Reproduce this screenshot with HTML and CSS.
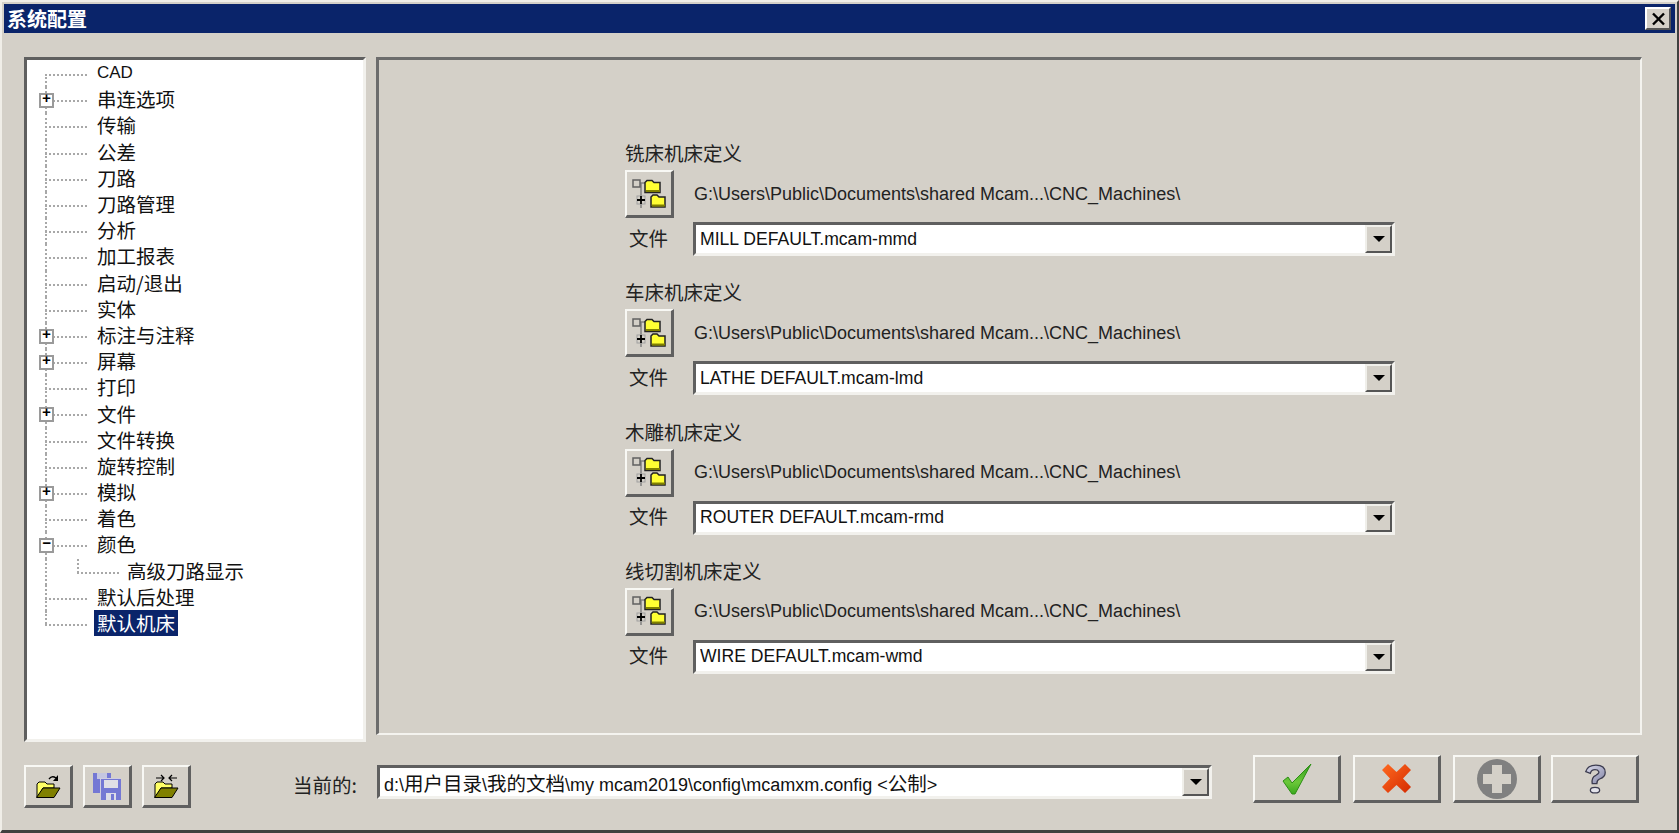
FILE: index.html
```html
<!DOCTYPE html>
<html lang="zh">
<head>
<meta charset="utf-8">
<title>系统配置</title>
<link rel="stylesheet" href="styles.css">
</head>
<body>
<div class="window">
  <div class="titlebar">
    <span class="title-text">系统配置</span>
    <button class="close-btn"><svg width="15" height="14" viewBox="0 0 15 14"><path d="M2 1.500l11 11M13 1.500l-11 11" stroke="#000" stroke-width="2.400" fill="none"/></svg></button>
  </div>
  <div class="main">
    <div class="tree">
      <div class="row latin-row"><span class="label">CAD</span></div>
      <div class="row"><span class="box">+</span><span class="label">串连选项</span></div>
      <div class="row"><span class="label">传输</span></div>
      <div class="row"><span class="label">公差</span></div>
      <div class="row"><span class="label">刀路</span></div>
      <div class="row"><span class="label">刀路管理</span></div>
      <div class="row"><span class="label">分析</span></div>
      <div class="row"><span class="label">加工报表</span></div>
      <div class="row"><span class="label">启动/退出</span></div>
      <div class="row"><span class="label">实体</span></div>
      <div class="row"><span class="box">+</span><span class="label">标注与注释</span></div>
      <div class="row"><span class="box">+</span><span class="label">屏幕</span></div>
      <div class="row"><span class="label">打印</span></div>
      <div class="row"><span class="box">+</span><span class="label">文件</span></div>
      <div class="row"><span class="label">文件转换</span></div>
      <div class="row"><span class="label">旋转控制</span></div>
      <div class="row"><span class="box">+</span><span class="label">模拟</span></div>
      <div class="row"><span class="label">着色</span></div>
      <div class="row"><span class="box minus">−</span><span class="label">颜色</span></div>
      <div class="row child"><span class="elbow"></span><span class="label">高级刀路显示</span></div>
      <div class="row"><span class="label">默认后处理</span></div>
      <div class="row last"><span class="label selected">默认机床</span></div>
    </div>
    <div class="panel">
      <section class="group">
        <div class="group-title">铣床机床定义</div>
        <div class="path-row">
          <button class="btn tree-btn"><svg width="34" height="30" viewBox="0 0 34 30"><use href="#i-tree"/></svg></button>
          <span class="path">G:\Users\Public\Documents\shared Mcam...\CNC_Machines\</span>
        </div>
        <div class="file-row">
          <span class="file-label">文件</span>
          <div class="combo"><span class="combo-text">MILL DEFAULT.mcam-mmd</span><span class="arrow"></span></div>
        </div>
      </section>
      <section class="group">
        <div class="group-title">车床机床定义</div>
        <div class="path-row">
          <button class="btn tree-btn"><svg width="34" height="30" viewBox="0 0 34 30"><use href="#i-tree"/></svg></button>
          <span class="path">G:\Users\Public\Documents\shared Mcam...\CNC_Machines\</span>
        </div>
        <div class="file-row">
          <span class="file-label">文件</span>
          <div class="combo"><span class="combo-text">LATHE DEFAULT.mcam-lmd</span><span class="arrow"></span></div>
        </div>
      </section>
      <section class="group">
        <div class="group-title">木雕机床定义</div>
        <div class="path-row">
          <button class="btn tree-btn"><svg width="34" height="30" viewBox="0 0 34 30"><use href="#i-tree"/></svg></button>
          <span class="path">G:\Users\Public\Documents\shared Mcam...\CNC_Machines\</span>
        </div>
        <div class="file-row">
          <span class="file-label">文件</span>
          <div class="combo"><span class="combo-text">ROUTER DEFAULT.mcam-rmd</span><span class="arrow"></span></div>
        </div>
      </section>
      <section class="group">
        <div class="group-title">线切割机床定义</div>
        <div class="path-row">
          <button class="btn tree-btn"><svg width="34" height="30" viewBox="0 0 34 30"><use href="#i-tree"/></svg></button>
          <span class="path">G:\Users\Public\Documents\shared Mcam...\CNC_Machines\</span>
        </div>
        <div class="file-row">
          <span class="file-label">文件</span>
          <div class="combo"><span class="combo-text">WIRE DEFAULT.mcam-wmd</span><span class="arrow"></span></div>
        </div>
      </section>
    </div>
  </div>
  <div class="footer">
    <div class="left-tools">
      <button class="btn tool"><svg width="28" height="28" viewBox="0 0 28 28"><path d="M15 7q3-4 7-1" fill="none" stroke="#000" stroke-width="1.400"/><path d="M24 3v6h-5z" fill="#000"/><use href="#i-folder"/></svg></button>
      <button class="btn tool"><svg width="28" height="28" viewBox="0 0 28 28"><path d="M0 1h18v20H0z" fill="#7478d4"/><path d="M4 1h10v6H4z" fill="#c4c6e0"/><path d="M7 6h21v22H7z" fill="#cfcde0"/><path d="M8 7h20v21H8z" fill="#7478d4"/><path d="M11 8h14v8H11z" fill="#e0dfe6"/><path d="M13 21h10v7H13z" fill="#dcdce8"/><path d="M18 22h3v6h-3z" fill="#7478d4"/></svg></button>
      <button class="btn tool"><svg width="28" height="28" viewBox="0 0 28 28"><path d="M4 6h8M9 3l3 3-3 3M25 6h-8M20 3l-3 3 3 3" fill="none" stroke="#000" stroke-width="1.200"/><use href="#i-folder"/></svg></button>
    </div>
    <span class="current-label">当前的:</span>
    <div class="combo current"><span class="combo-text">d:\<span class="cjk">用户目录</span>\<span class="cjk">我的文档</span>\my mcam2019\config\mcamxm.config &lt;<span class="cjk">公制</span>&gt;</span><span class="arrow"></span></div>
    <div class="actions">
      <button class="btn action"><svg width="30" height="32" viewBox="0 0 30 32"><path d="M1 18l5-4 4 6L29 1 13 31h-3z" fill="url(#g-check)" stroke="#2c8f14" stroke-width="1"/></svg></button>
      <button class="btn action"><svg width="31" height="31" viewBox="0 0 31 31"><path d="M7 1l8.500 8 8.500-8 6 6-8 8.500 8 8.500-6 6-8.500-8-8.500 8-6-6 8-8.500-8-8.500z" fill="url(#g-cross)"/></svg></button>
      <button class="btn action"><svg width="40" height="40" viewBox="0 0 40 40"><circle cx="20" cy="20" r="20" fill="#808080"/><path d="M15 6h10v9h9v10h-9v9H15v-9H6V15h9z" fill="#d4d0c8"/></svg></button>
      <button class="btn action"><svg width="26" height="34" viewBox="0 0 28 34"><path d="M4 9q2-7 11-7 10 0 10 8 0 5-6 7-3 1-3 5h-5q-1-7 4-9 4-2 3-4t-4-2q-4 0-5 4z" fill="url(#g-help)" stroke="#3c3c50" stroke-width="1.400"/><ellipse cx="14" cy="29" rx="5" ry="3" fill="#e4e4ec" stroke="#3c3c50" stroke-width="1.400"/></svg></button>
    </div>
  </div>
</div>
<svg class="defs" width="0" height="0">
  <defs>
    <linearGradient id="g-check" x1="0" y1="0" x2="0" y2="1"><stop offset="0" stop-color="#2f9c1c"/><stop offset="0.6" stop-color="#6cc83a"/><stop offset="1" stop-color="#3aa81e"/></linearGradient>
    <linearGradient id="g-cross" x1="0" y1="0" x2="1" y2="1"><stop offset="0" stop-color="#ff6a20"/><stop offset="1" stop-color="#d42a00"/></linearGradient>
    <linearGradient id="g-help" x1="0" y1="0" x2="1" y2="1"><stop offset="0" stop-color="#dcdcec"/><stop offset="1" stop-color="#8284a6"/></linearGradient>
    <g id="i-tree">
      <path d="M9 4v25M7 4h6" stroke="#808080" stroke-width="1.500" fill="none"/>
      <rect x="1" y="1" width="7" height="7" fill="#d4d0c8" stroke="#606060" stroke-width="1.500"/>
      <path d="M13 3.500l2-2h5l2 2h6v10H13z" fill="#ffff33" stroke="#222" stroke-width="1.500"/>
      <path d="M14 12h14" stroke="#808000" stroke-width="2"/>
      <rect x="5" y="17" width="8" height="8" fill="#d4d0c8" stroke="#a0a0a0"/>
      <path d="M5 21h8M9 17v8" stroke="#000" stroke-width="1.800"/>
      <path d="M19 18l2-2h4l2 2h6v10H19z" fill="#ffff33" stroke="#222" stroke-width="1.500"/>
      <path d="M20 26.500h13" stroke="#808000" stroke-width="2"/>
    </g>
    <g id="i-folder">
      <path d="M3 12l2-2h6l2 2h7v4H9l-5 9H3z" fill="#ffff66" stroke="#000"/>
      <path d="M9 16h17l-6 9.500H2.500z" fill="#808000" stroke="#000"/>
    </g>
  </defs>
</svg>
</body>
</html>
```
FILE: styles.css
```css
* { box-sizing: border-box; }
html, body { margin: 0; padding: 0; }
body {
  width: 1679px;
  height: 833px;
  overflow: hidden;
  font-family: "Liberation Sans", "Noto Sans CJK SC", sans-serif;
  color: #000;
  background: #d4d0c8;
}
.defs { position: absolute; }
.window {
  width: 1679px;
  height: 833px;
  display: flex;
  flex-direction: column;
  background: #d4d0c8;
  border-top: 2px solid #f0eee8;
  border-left: 2px solid #f0eee8;
  border-right: 2px solid #404040;
  border-bottom: 3px solid #404040;
  padding: 2px 2px 0;
}
.titlebar {
  height: 29px;
  flex: none;
  background: #0a246a;
  display: flex;
  align-items: center;
  justify-content: space-between;
  padding: 0 4px 0 3px;
}
.title-text {
  color: #fff;
  font-family: "Noto Sans CJK SC", sans-serif;
  font-weight: 700;
  font-size: 20px;
  line-height: 29px;
}
.close-btn {
  width: 26px;
  height: 23px;
  padding: 0;
  display: flex;
  align-items: center;
  justify-content: center;
  background: #d4d0c8;
  border: 2px solid;
  border-color: #fff #555 #555 #fff;
}
.main {
  display: flex;
  flex: none;
  align-items: flex-start;
  padding: 24px 0 0 20px;
  gap: 10px;
}
.tree {
  width: 342px;
  height: 685px;
  flex: none;
  background: #fff;
  border-style: solid;
  border-width: 3px;
  border-color: #5f5f5f #f2f1ed #f2f1ed #5f5f5f;
  padding-top: 1px;
}
.row {
  position: relative;
  height: 26.2px;
  padding-left: 67px;
  display: flex;
  align-items: center;
  font-family: "Noto Sans CJK SC", sans-serif;
  font-size: 19.5px;
  line-height: 24px;
  color: #111;
}
.row::before {
  content: "";
  position: absolute;
  left: 18px;
  width: 42px;
  top: 13px;
  border-top: 2px dotted #a8a8a8;
}
.row::after {
  content: "";
  position: absolute;
  left: 18px;
  top: 0;
  bottom: 0;
  border-left: 2px dotted #a8a8a8;
}
.row.last::after { bottom: 13px; }
.row.child { padding-left: 97px; }
.row.child::before { left: 50px; width: 42px; }
.row.child .label { white-space: nowrap; }
.elbow {
  position: absolute;
  left: 50px;
  top: 0;
  height: 14px;
  border-left: 2px dotted #a8a8a8;
}
.latin-row { font-family: "Liberation Sans", sans-serif; font-size: 17px; }
.latin-row::after { top: 13px; }
.label { padding: 0 3px; position: relative; top: -1px; z-index: 1; }
.selected {
  background: #0a246a;
  color: #fff;
  height: 26px;
  line-height: 25px;
  margin-left: 0;
  top: -1px;
}
.box {
  position: absolute;
  z-index: 2;
  left: 12px;
  top: 6px;
  width: 15px;
  height: 15px;
  background: #fff;
  border: 2px solid #9a9a9a;
  font: 700 15px/10px "Liberation Mono", monospace;
  text-align: center;
  color: #000;
}
.panel {
  width: 1266px;
  height: 678px;
  flex: none;
  border-style: solid;
  border-width: 3px 2px 2px 3px;
  border-color: #6c6c6c #f4f3ef #f4f3ef #6c6c6c;
  padding: 81px 0 0 246px;
  display: flex;
  flex-direction: column;
}
.group { height: 139.3px; flex: none; }
.group-title {
  font-family: "Noto Sans CJK SC", sans-serif;
  font-size: 19.5px;
  line-height: 24px;
  color: #222;
  height: 24px;
  margin-bottom: 5px;
}
.path-row {
  display: flex;
  align-items: center;
  height: 48px;
  gap: 20px;
}
.path { font-size: 18px; color: #222; white-space: nowrap; }
.btn {
  background: #d4d0c8;
  padding: 0;
  display: flex;
  align-items: center;
  justify-content: center;
  border-style: solid;
  border-color: #f8f8f4 #606060 #606060 #f8f8f4;
  border-width: 2px 3px 3px 2px;
}
.tree-btn { width: 49px; height: 48px; flex: none; }
.file-row {
  display: flex;
  align-items: center;
  height: 34px;
  margin-top: 4px;
}
.file-label {
  width: 68px;
  padding: 0 0 4px 4px;
  font-family: "Noto Sans CJK SC", sans-serif;
  font-size: 19.5px;
  color: #222;
}
.combo {
  position: relative;
  width: 702px;
  height: 34px;
  display: flex;
  align-items: center;
  background: #fff;
  border-style: solid;
  border-width: 3px;
  border-color: #5f5f5f #f2f1ed #f2f1ed #5f5f5f;
  padding-left: 4px;
  font-size: 17.6px;
  color: #111;
}
.combo-text { flex: 1; white-space: nowrap; overflow: hidden; }
.cjk { font-family: "Noto Sans CJK SC", sans-serif; font-size: 19.5px; }
.arrow {
  width: 27px;
  height: 28px;
  flex: none;
  background: #d4d0c8;
  border-style: solid;
  border-width: 2px;
  border-color: #f0efea #555 #555 #f0efea;
  display: flex;
  align-items: center;
  justify-content: center;
}
.arrow::after {
  content: "";
  border-style: solid;
  border-width: 6px 6px 0;
  border-color: #000 transparent transparent;
}
.footer {
  display: flex;
  align-items: flex-start;
  padding: 13px 0 0 20px;
}
.left-tools {
  display: flex;
  gap: 10px;
  margin-top: 10px;
}
.tool { width: 49px; height: 43px; }
.current-label {
  margin: 17px 21px 0 102px;
  font-family: "Noto Sans CJK SC", sans-serif;
  font-size: 19.5px;
  line-height: 26px;
  color: #222;
  width: 63px;
  white-space: nowrap;
}
.combo.current { width: 835px; margin-top: 10px; font-size: 18px; }
.actions {
  display: flex;
  margin-left: 41px;
}
.action { width: 88px; height: 48px; }
.action + .action { margin-left: 12px; }
.action:last-child { margin-left: 10px; }
```
